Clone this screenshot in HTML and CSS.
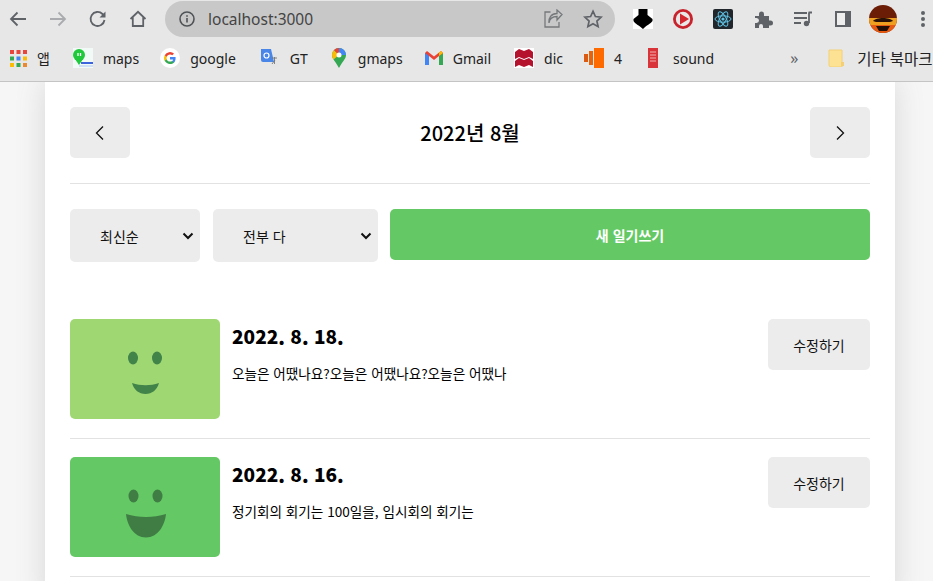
FILE: index.html
```html
<!DOCTYPE html>
<html lang="ko">
<head>
  <meta charset="UTF-8">
  <title>localhost:3000</title>
  <link rel="stylesheet" href="styles.css">
</head>
<body>
  <!-- browser chrome -->
  <header class="chrome">
    <div class="toolbar">
      <svg class="tool" width="20" height="20" viewBox="0 0 20 20"><path d="M18 10H3M9.500 3.500 3 10l6.500 6.500" fill="none" stroke="#5f6368" stroke-width="1.800"/></svg>
      <svg class="tool" width="20" height="20" viewBox="0 0 20 20"><path d="M2 10h15M10.500 3.500 17 10l-6.500 6.500" fill="none" stroke="#a9abae" stroke-width="1.800"/></svg>
      <svg class="tool" width="20" height="20" viewBox="0 0 20 20"><path d="M16.500 11a7 7 0 1 1-2-6l2 2" fill="none" stroke="#5f6368" stroke-width="1.800"/><path d="M17.500 2.500v6h-6z" fill="#5f6368"/></svg>
      <svg class="tool" width="20" height="20" viewBox="0 0 20 20"><path d="M2.500 10 10 2.800 17.500 10M4.800 8.500V17h10.400V8.500" fill="none" stroke="#5f6368" stroke-width="1.800"/></svg>
      <div class="omnibox">
        <svg width="16" height="16" viewBox="0 0 16 16"><circle cx="8" cy="8" r="7" fill="none" stroke="#505356" stroke-width="1.600"/><path d="M8 7v4.500M8 4.200v1.600" stroke="#505356" stroke-width="1.600"/></svg>
        <span class="url">localhost:3000</span>
        <svg class="share" width="20" height="20" viewBox="0 0 20 20"><path d="M7.500 3H2v15h14v-5M6 14c.5-4 3.500-6.500 8-6.500V11l5-5.500L14 1v3.500C8 4.500 5.500 9 6 14z" fill="none" stroke="#75787b" stroke-width="1.300"/></svg>
        <svg width="20" height="20" viewBox="0 0 20 20"><path d="m10 2.200 2.400 5.300 5.800.6-4.300 3.900 1.200 5.700L10 14.800l-5.100 2.900 1.200-5.700-4.300-3.900 5.800-.6z" fill="none" stroke="#5f6368" stroke-width="1.700"/></svg>
      </div>
      <div class="extensions">
        <svg width="20" height="20" viewBox="0 0 20 20"><rect width="20" height="20" fill="#fff"/><path d="M5.500 0h9v6l5 4v2c-2 3-6 4-9.500 8C6 16 2 15 .5 12v-2l5-4z"/></svg>
        <svg width="20" height="20" viewBox="0 0 20 20"><circle cx="10" cy="10" r="10" fill="#c8232c"/><circle cx="10" cy="10" r="7.200" fill="#e8e8e8"/><path d="M7 4.500 16 10l-9 5.500z" fill="#d3262f"/></svg>
        <svg width="20" height="20" viewBox="0 0 20 20"><rect width="20" height="20" rx="2" fill="#20262c"/><g fill="none" stroke="#61c4e6" stroke-width="1"><ellipse cx="10" cy="10" rx="8" ry="3.200"/><ellipse cx="10" cy="10" rx="8" ry="3.200" transform="rotate(60 10 10)"/><ellipse cx="10" cy="10" rx="8" ry="3.200" transform="rotate(120 10 10)"/></g><circle cx="10" cy="10" r="1.600" fill="#61c4e6"/></svg>
        <svg width="20" height="20" viewBox="0 0 20 20"><path d="M2 7h4V5a2.500 2.500 0 0 1 5 0v2h5v4.500h1.500a2.500 2.500 0 0 1 0 5H16V19H10v-2a2 2 0 0 0-4 0v2H2v-5h1.500a2.500 2.500 0 0 0 0-5H2z" fill="#5f6368"/></svg>
        <svg width="20" height="20" viewBox="0 0 20 20"><path d="M1 4h13M1 9h13M1 14h7" stroke="#5f6368" stroke-width="1.800"/><path d="M15.500 3.500h3.500M16 3.500V14" stroke="#5f6368" stroke-width="1.800"/><circle cx="13.500" cy="14.500" r="2.700" fill="#5f6368"/></svg>
        <svg width="20" height="20" viewBox="0 0 20 20"><rect x="2" y="2" width="16" height="16" fill="#5f6368"/><rect x="4" y="4" width="8" height="12" fill="#eee"/></svg>
        <svg class="avatar" width="28" height="28" viewBox="0 0 28 28"><defs><clipPath id="avatar"><circle cx="14" cy="14" r="14"/></clipPath></defs><g clip-path="url(#avatar)"><rect width="28" height="28" fill="#6b1d06"/><rect y="13" width="28" height="7" fill="#f0a020"/><rect y="20" width="28" height="8" fill="#e85a10"/><path d="M4 16c3-4 17-4 20 0l-3 1H7z" fill="#2a1208"/><path d="M7 21h14l-3 5h-8z" fill="#241008"/></g></svg>
        <svg width="6" height="20" viewBox="0 0 6 20"><circle cx="3" cy="4" r="2" fill="#5f6368"/><circle cx="3" cy="10" r="2" fill="#5f6368"/><circle cx="3" cy="16" r="2" fill="#5f6368"/></svg>
      </div>
    </div>
    <nav class="bookmarks">
      <a class="mark mark-apps">
        <svg width="17" height="17" viewBox="0 0 17 17"><g fill="#e8453c"><rect width="4" height="4"/><rect x="6.500" width="4" height="4"/></g><rect x="13" width="4" height="4" fill="#e8453c"/><rect y="6.500" width="4" height="4" fill="#34a853"/><rect x="6.500" y="6.500" width="4" height="4" fill="#4285f4"/><rect x="13" y="6.500" width="4" height="4" fill="#fbbc05"/><rect y="13" width="4" height="4" fill="#fbbc05"/><rect x="6.500" y="13" width="4" height="4" fill="#34a853"/><rect x="13" y="13" width="4" height="4" fill="#ea8a30"/></svg>
        앱</a>
      <a class="mark mark-maps">
        <svg width="20" height="20" viewBox="0 0 20 20"><rect width="20" height="20" fill="#f2faf8"/><circle cx="6" cy="7" r="6" fill="#1fc93b"/><path d="M2 11l4 6 4-6z" fill="#1fc93b"/><path d="M5 5v3M7.500 5v3" stroke="#fff" stroke-width="1.300"/><rect x="8" y="14" width="12" height="2" fill="#3d63dd"/><rect x="6" y="17" width="14" height="2" fill="#cfe0f7"/></svg>
        maps</a>
      <a class="mark mark-google">
        <svg width="20" height="20" viewBox="0 0 20 20"><circle cx="10" cy="10" r="10" fill="#fff"/><path d="M15.600 10.200c0-.5 0-.9-.1-1.300H10v2.500h3.200c-.2.800-.6 1.400-1.200 1.800v1.500h1.900c1.100-1 1.700-2.600 1.700-4.500z" fill="#4285f4"/><path d="M10 16c1.600 0 3-.5 3.900-1.500L12 13c-.5.400-1.200.6-2 .6-1.600 0-2.900-1-3.300-2.400h-2v1.600C5.700 14.700 7.700 16 10 16z" fill="#34a853"/><path d="M6.700 11.200c-.2-.8-.2-1.600 0-2.400V7.200h-2a6 6 0 0 0 0 5.600z" fill="#fbbc05"/><path d="M10 6.400c.9 0 1.700.3 2.300.9L14 5.600A6 6 0 0 0 4.700 7.200l2 1.600C7.100 7.400 8.400 6.400 10 6.400z" fill="#ea4335"/></svg>
        google</a>
      <a class="mark mark-gt">
        <svg width="20" height="20" viewBox="0 0 20 20"><path d="M9 5h10v14H11z" fill="#e6e6e6"/><path d="M1 1h10l3 13H3a2 2 0 0 1-2-2z" fill="#4a86e8"/><circle cx="6.500" cy="7.500" r="2.500" fill="none" stroke="#fff" stroke-width="1.200"/><path d="M12 10h5M14.500 9v7M12 16l3-4" stroke="#777" stroke-width=".9"/></svg>
        GT</a>
      <a class="mark mark-gmaps">
        <svg width="20" height="20" viewBox="0 0 20 20"><path d="M10 0a7 7 0 0 1 7 7c0 4-4 7-7 13-3-6-7-9-7-13a7 7 0 0 1 7-7z" fill="#34a853"/><path d="M3 7a7 7 0 0 1 2-5l5 5-5.500 4.500C3.500 10 3 8.500 3 7z" fill="#fbbc05"/><path d="M5 2a7 7 0 0 1 5-2v7z" fill="#ea4335"/><path d="M10 0a7 7 0 0 1 7 7h-7z" fill="#4285f4"/><circle cx="10" cy="7" r="2.500" fill="#fff"/></svg>
        gmaps</a>
      <a class="mark mark-gmail">
        <svg width="18" height="14" viewBox="0 0 18 14"><path d="M0 2v12h4V5l5 4 5-4v9h4V2l-2-2-7 5.500L2 0z" fill="#ea4335"/><path d="M0 2v12h4V5z" fill="#4285f4"/><path d="M14 5v9h4V2z" fill="#34a853"/><path d="M14 5l4-3-2-2-2 1.500z" fill="#fbbc05"/></svg>
        Gmail</a>
      <a class="mark mark-dic">
        <svg width="20" height="20" viewBox="0 0 20 20"><rect width="20" height="20" fill="#fff"/><path d="M1 4l4-3 5 2 5-2 4 3v7l-4-2-5 2-5-2-4 2zM1 13l4-3 5 2 5-2 4 3v6l-4-2-5 2-5-2-4 2z" fill="#b5122e"/></svg>
        dic</a>
      <a class="mark mark-four">
        <svg width="20" height="20" viewBox="0 0 20 20"><rect x="0" y="6" width="4" height="8" fill="#d95a10"/><rect x="5" y="3" width="4" height="14" fill="#e8640c"/><rect x="10" y="0" width="10" height="20" fill="#ff6a00"/></svg>
        4</a>
      <a class="mark mark-sound">
        <svg width="20" height="20" viewBox="0 0 20 20"><rect x="5" width="10" height="20" fill="#d8343a"/><path d="M7 4h6M7 7h6M7 10h6M7 13h6" stroke="#f3b3b3"/></svg>
        sound</a>
      <span class="more">»</span>
      <span class="sep"></span>
      <a class="mark mark-other">
        <svg width="16" height="18" viewBox="0 0 16 18"><path d="M1 1h13v17H3a2 2 0 0 1-2-2z" fill="#fde293" stroke="#f3d078"/><rect x="13" y="13" width="3" height="4" fill="#f3d078"/></svg>
        기타 북마크</a>
    </nav>
  </header>

  <div class="page">
    <main class="diary">
      <section class="month-head">
        <button class="btn nav-btn">
          <svg width="10" height="16" viewBox="0 0 10 16"><path d="M8 1.500 1.500 8 8 14.500" fill="none" stroke="#111" stroke-width="1.300"/></svg>
        </button>
        <h1 class="month-title">2022년 8월</h1>
        <button class="btn nav-btn">
          <svg width="10" height="16" viewBox="0 0 10 16"><path d="M2 1.500 8.500 8 2 14.500" fill="none" stroke="#111" stroke-width="1.300"/></svg>
        </button>
      </section>

      <section class="controls">
        <div class="picker picker-order">
          <span>최신순</span>
          <svg width="12" height="8" viewBox="0 0 12 8"><path d="M1.500 1.500 6 6l4.500-4.500" fill="none" stroke="#111" stroke-width="2"/></svg>
        </div>
        <div class="picker picker-filter">
          <span>전부 다</span>
          <svg width="12" height="8" viewBox="0 0 12 8"><path d="M1.500 1.500 6 6l4.500-4.500" fill="none" stroke="#111" stroke-width="2"/></svg>
        </div>
        <button class="btn new-btn">새 일기쓰기</button>
      </section>

      <article class="entry">
        <div class="mood mood-light">
          <svg width="150" height="100" viewBox="0 0 150 100"><g fill="#42834a"><ellipse cx="63" cy="39" rx="5" ry="6.500"/><ellipse cx="87" cy="39" rx="5" ry="6.500"/><path d="M62 64c9 3 18 3 27 0-2 7-7 11-13.500 11S64 71 62 64z"/></g></svg>
        </div>
        <div class="entry-body">
          <div class="entry-date">2022. 8. 18.</div>
          <p class="entry-text">오늘은 어땠나요?오늘은 어땠나요?오늘은 어땠나</p>
        </div>
        <button class="btn edit-btn">수정하기</button>
      </article>

      <article class="entry">
        <div class="mood mood-green">
          <svg width="150" height="100" viewBox="0 0 150 100"><g fill="#3f7d45"><ellipse cx="63.500" cy="39" rx="5" ry="6.500"/><ellipse cx="87.500" cy="39" rx="5" ry="6.500"/><path d="M56 57c13 4 27 4 40 0-1 11-8 23.500-20 23.500S57 68 56 57z"/></g></svg>
        </div>
        <div class="entry-body">
          <div class="entry-date">2022. 8. 16.</div>
          <p class="entry-text">정기회의 회기는 100일을, 임시회의 회기는</p>
        </div>
        <button class="btn edit-btn">수정하기</button>
      </article>
    </main>
  </div>
</body>
</html>
```
FILE: styles.css
```css
html, body {
  margin: 0;
  padding: 0;
  height: 100%;
  overflow: hidden;
  background-color: #f6f6f6;
  font-family: "Noto Sans CJK KR", "Noto Sans", sans-serif;
}

/* browser chrome */
.chrome {
  height: 82px;
  box-sizing: border-box;
  background-color: #e7e7e7;
  border-bottom: 1px solid #c4c4c4;
  font-family: "Noto Sans", "Noto Sans CJK KR", sans-serif;
}

.toolbar {
  height: 38px;
  display: flex;
  align-items: center;
}

.tool {
  flex: none;
  margin-left: 8px;
  margin-right: 12px;
}

.omnibox {
  width: 450px;
  height: 36px;
  margin-left: 5px;
  padding: 0 12px 0 14px;
  box-sizing: border-box;
  display: flex;
  align-items: center;
  gap: 13px;
  border-radius: 18px;
  background-color: #c8c8c8;
}

.url {
  flex: 1;
  font-size: 15.500px;
  color: #444;
}

.share {
  margin-right: 7px;
}

.extensions {
  display: flex;
  align-items: center;
  gap: 20px;
  margin-left: 18px;
}

.avatar {
  margin-left: -4px;
  margin-right: 3px;
}

.bookmarks {
  height: 40px;
  display: flex;
  align-items: center;
  padding-left: 10px;
  white-space: nowrap;
  overflow: hidden;
  font-size: 14px;
  color: #222;
}

.mark {
  display: flex;
  align-items: center;
  gap: 10px;
  margin-right: 21px;
}

.mark-apps { margin-right: 22px; }
.mark-maps { margin-left: 1px; }
.mark-google { margin-right: 24px; }
.mark-gmaps svg { margin-right: -1px; }
.mark-gmail { margin-left: 1px; margin-right: 23px; }
.mark-four { margin-right: 21px; }

.more {
  margin-left: 55px;
  color: #5f6368;
  font-size: 16px;
}

.sep {
  width: 1px;
  height: 20px;
  margin-left: 16px;
  margin-right: 14px;
  background-color: #bbb;
}

.mark-other {
  gap: 13px;
  font-size: 15.500px;
}

/* diary page */
.page {
  height: 499px;
  overflow: hidden;
}

.diary {
  width: 850px;
  min-height: 520px;
  margin-left: 45px;
  padding: 25px 25px 0;
  box-sizing: border-box;
  background-color: #fff;
  box-shadow: 0 0 28px rgba(100, 100, 100, 0.2);
}

.btn {
  border: none;
  padding: 0;
  border-radius: 5px;
  background-color: #ececec;
  color: #111;
  font-family: inherit;
  font-size: 14px;
}

.month-head {
  display: flex;
  align-items: center;
  justify-content: space-between;
  padding-bottom: 25px;
  border-bottom: 1px solid #e2e2e2;
}

.nav-btn {
  width: 60px;
  height: 51px;
  display: flex;
  align-items: center;
  justify-content: center;
}

.month-title {
  margin: 0;
  font-size: 20px;
  font-weight: 500;
  color: #000;
}

.controls {
  display: flex;
  align-items: flex-start;
  margin-top: 25px;
  margin-bottom: 57px;
}

.picker {
  height: 53px;
  box-sizing: border-box;
  display: flex;
  align-items: center;
  justify-content: space-between;
  padding: 0 6px 0 30px;
  border-radius: 5px;
  background-color: #ececec;
  font-size: 14px;
  color: #111;
}

.picker-order {
  width: 130px;
  margin-right: 13px;
}

.picker-filter {
  width: 165px;
  margin-right: 12px;
}

.new-btn {
  flex: 1;
  height: 51px;
  background-color: #64c964;
  color: #fff;
  font-weight: 700;
}

.entry {
  display: flex;
  align-items: flex-start;
  padding-bottom: 19px;
  margin-bottom: 18px;
  border-bottom: 1px solid #e2e2e2;
}

.mood {
  flex: none;
  width: 150px;
  height: 100px;
  border-radius: 5px;
}

.mood svg {
  display: block;
}

.mood-light {
  background-color: #9fd873;
}

.mood-green {
  background-color: #64c964;
}

.entry-body {
  flex: 1;
  margin-left: 12px;
}

.entry-date {
  margin-top: 3px;
  font-size: 19px;
  line-height: 28px;
  font-weight: 900;
  color: #000;
}

.entry-text {
  margin: 13px 0 0;
  font-size: 13.600px;
  line-height: 20px;
  color: #000;
}

.edit-btn {
  flex: none;
  width: 102px;
  height: 51px;
}
```
